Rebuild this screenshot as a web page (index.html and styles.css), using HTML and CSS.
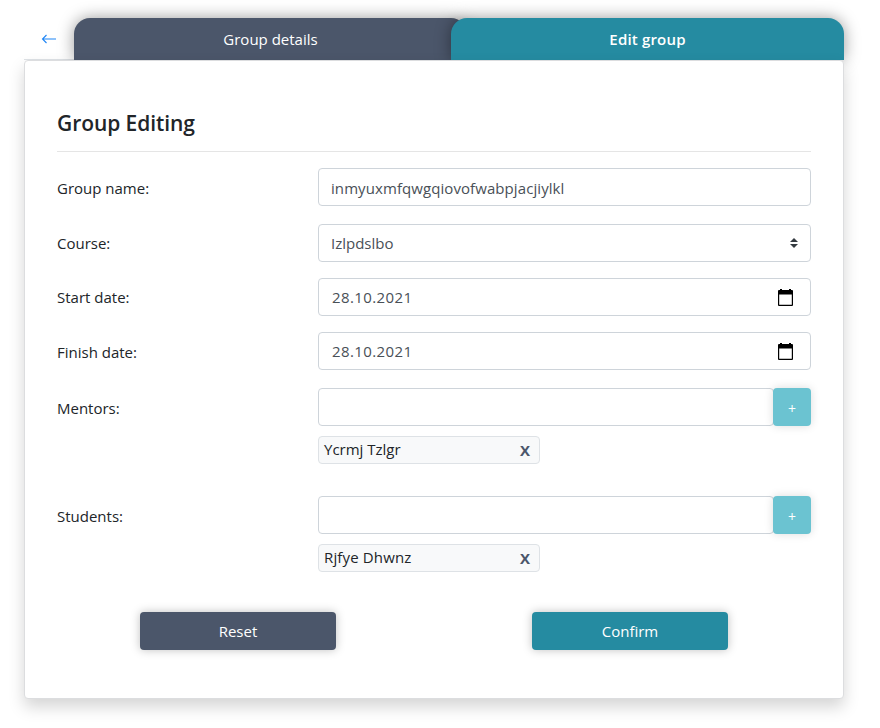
FILE: index.html
```html
<!DOCTYPE html>
<html lang="en">
<head>
<meta charset="utf-8">
<title>Group Editing</title>
<link rel="stylesheet" href="styles.css">
</head>
<body>
<main class="page">
  <nav class="tabs">
    <a class="back" href="#" aria-label="Back"><svg width="16" height="16" viewBox="0 0 16 16"><path d="M15 8H2M5.500 4L1.500 8l4 4" fill="none" stroke="#1f86f5" stroke-width="1.100"/></svg></a>
    <a class="tab" href="#"><span class="t-details">Group details</span></a>
    <a class="tab active" href="#"><span class="t-edit">Edit group</span></a>
  </nav>
  <form class="card">
    <h3><span>Group Editing</span></h3>
    <div class="row name"><label>Group name:</label><div class="control"><span class="t-name">inmyuxmfqwgqiovofwabpjacjiylkl</span></div></div>
    <div class="row course"><label>Course:</label><div class="control"><span class="t-course">Izlpdslbo</span><svg class="caret" width="8" height="10" viewBox="0 0 8 10"><path d="M0 4L4 0l4 4zM0 6h8L4 10z" fill="#343a40"/></svg></div></div>
    <div class="row start"><label>Start date:</label><div class="control date"><span>28.10.2021</span><svg width="15" height="17" viewBox="0 0 15 17"><path d="M2 0h2v1h7V0h2v1h1q1 0 1 1v14q0 1-1 1H1q-1 0-1-1V2q0-1 1-1h1zM1.200 5.500v10.200h12.600V5.500z" fill="#000" fill-rule="evenodd"/></svg></div></div>
    <div class="row finish"><label>Finish date:</label><div class="control date"><span>28.10.2021</span><svg width="15" height="17" viewBox="0 0 15 17"><path d="M2 0h2v1h7V0h2v1h1q1 0 1 1v14q0 1-1 1H1q-1 0-1-1V2q0-1 1-1h1zM1.200 5.500v10.200h12.600V5.500z" fill="#000" fill-rule="evenodd"/></svg></div></div>
    <div class="row people"><label>Mentors:</label><div class="stack">
      <div class="group"><div class="control"></div><button type="button" class="add">+</button></div>
      <div class="chip"><span class="t-mentor">Ycrmj Tzlgr</span><b>X</b></div></div></div>
    <div class="row people"><label>Students:</label><div class="stack">
      <div class="group"><div class="control"></div><button type="button" class="add">+</button></div>
      <div class="chip"><span class="t-student">Rjfye Dhwnz</span><b>X</b></div></div></div>
    <div class="actions"><button type="button" class="btn dark">Reset</button><button type="button" class="btn teal">Confirm</button></div>
  </form>
</main>
</body>
</html>
```
FILE: styles.css
```css
* { box-sizing: border-box; }
body { margin: 0; min-height: 728px; padding-top: 18px; background: #fff; color: #212529; font: 15px/24px "Open Sans", "Noto Sans", sans-serif; }
.page { width: 820px; margin-left: 24px; }
.tabs { display: flex; height: 42px; border-bottom: 1px solid #dee2e6; }
.back { width: 50px; display: flex; align-items: center; justify-content: center; color: #007bff; }
.tab { width: 393px; height: 42px; line-height: 42px; text-align: center; color: #fff; text-decoration: none; background: #4b566a; border-radius: 16px 16px 0 0; box-shadow: 0 0 16px rgba(0,0,0,.4); }
.tab.active { margin-left: -16px; background: #258ba1; font-weight: 600; }
.t-edit { letter-spacing: .18px; }
.card { position: relative; height: 639px; padding: 47px 32px 0; background: #fff; border: 1px solid #dcdddf; border-radius: 4px; box-shadow: 0 8px 16px rgba(0,0,0,.17); }
h3 { margin: 0 0 16px; height: 44px; border-bottom: 1px solid #e5e5e5; font-size: 21px; line-height: 30px; font-weight: 600; letter-spacing: -.08px; }
.row { display: flex; justify-content: space-between; height: 38px; }
.row label { line-height: 40px; }
.control { display: flex; align-items: center; justify-content: space-between; width: 493px; height: 38px; padding: 0 12px 0 13px; border: 1px solid #ced4da; border-radius: 4px; color: #495057; background: #fff; }
.name { margin-bottom: 18px; }
.name .control { padding: 2px 12px 0; }
.t-name { letter-spacing: .08px; }
.course .control { padding-left: 12px; }
.course, .start { margin-bottom: 16px; }
.course label, .start label { line-height: 38px; }
.finish { margin-bottom: 18px; }
.date { padding-right: 17px; letter-spacing: .4px; }
.stack { width: 493px; height: 76px; }
.people { height: 76px; margin-bottom: 32px; }
.group { display: flex; margin-bottom: 10px; }
.group .control { flex: 1; width: auto; }
.add { width: 38px; height: 38px; margin-left: -1px; padding: 2px 0 0; border: 0; border-radius: 4px; background: #6bc3d1; color: #fff; font: 14px "Open Sans", sans-serif; box-shadow: 0 0 10px rgba(0,0,0,.14); }
.chip { display: flex; justify-content: space-between; align-items: center; width: 222px; height: 28px; padding: 0 9px 0 5px; background: #f8f9fa; border: 1px solid #dee2e6; border-radius: 4px; }
.t-mentor, .t-student { margin-top: -2px; }
.t-student { letter-spacing: .15px; }
.chip b { color: #4b566a; font-weight: 700; }
.actions { display: flex; justify-content: space-between; padding: 8px 83px 0; }
.btn { width: 196px; height: 38px; border: 0; border-radius: 4px; color: #fff; font: 15px "Open Sans", sans-serif; box-shadow: 0 0 10px rgba(0,0,0,.25); }
.dark { background: #4b566a; }
.teal { background: #258ba1; }
```
